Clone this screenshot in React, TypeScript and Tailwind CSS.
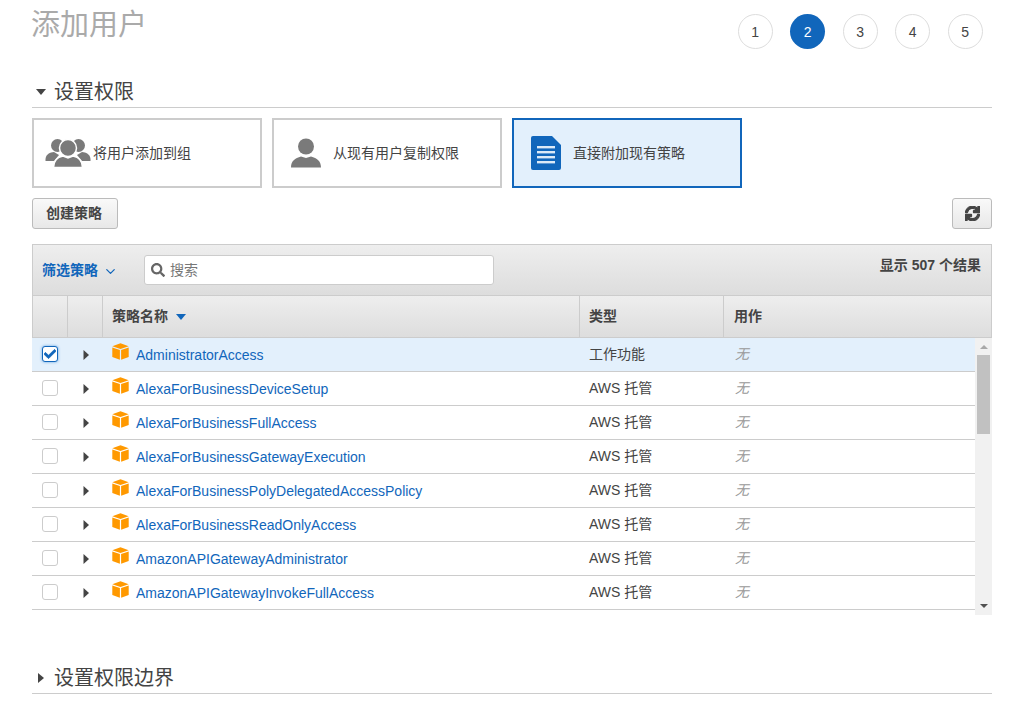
// App.tsx
// Add user wizard, step 2: attach existing policies

import React from 'react';
import { FaCheck, FaSearch, FaSync } from 'react-icons/fa';
import { LuChevronDown } from 'react-icons/lu';

const policies = [
  { name: 'AdministratorAccess', type: '工作功能', selected: true },
  { name: 'AlexaForBusinessDeviceSetup', type: 'AWS 托管' },
  { name: 'AlexaForBusinessFullAccess', type: 'AWS 托管' },
  { name: 'AlexaForBusinessGatewayExecution', type: 'AWS 托管' },
  { name: 'AlexaForBusinessPolyDelegatedAccessPolicy', type: 'AWS 托管' },
  { name: 'AlexaForBusinessReadOnlyAccess', type: 'AWS 托管' },
  { name: 'AmazonAPIGatewayAdministrator', type: 'AWS 托管' },
  { name: 'AmazonAPIGatewayInvokeFullAccess', type: 'AWS 托管' },
];

const CubeIcon = () => (
  <svg width="17" height="17" viewBox="0 0 17 17" className="shrink-0">
    <path d="M8.5 0.3 L16.7 3.2 L8.5 6 L0.3 3.2 Z" fill="#ff9900" />
    <path d="M0.3 4.4 L7.9 7 V16.8 L0.3 13.9 Z" fill="#ff9900" />
    <path d="M16.7 4.4 L9.1 7 V16.8 L16.7 13.9 Z" fill="#ff9900" />
  </svg>
);

const TriangleRight = () => (
  <svg width="6" height="10" viewBox="0 0 6 10">
    <path d="M0.5 0 L6 5 L0.5 10 Z" fill="#444444" />
  </svg>
);

const GroupIcon = () => (
  <svg width="46" height="30" viewBox="0 0 46 30" className="shrink-0">
    <g fill="#7a7a7a">
      <circle cx="12.5" cy="7.5" r="6.5" />
      <circle cx="33.5" cy="7.5" r="6.5" />
      <path d="M0.5 21 C1 16 5 14.5 9 14 L14 17 L9 23 H0.5 Z" />
      <path d="M45.5 21 C45 16 41 14.5 37 14 L32 17 L37 23 H45.5 Z" />
    </g>
    <g fill="#7a7a7a" stroke="#ffffff" strokeWidth="1.5">
      <circle cx="23" cy="10" r="8.5" />
      <path d="M8.5 29.5 C8.5 22 13 19 18 18 L23 20 L28 18 C33 19 37.5 22 37.5 29.5 Z" />
    </g>
  </svg>
);

const UserIcon = () => (
  <svg width="32" height="30" viewBox="0 0 32 30" className="shrink-0">
    <g fill="#7a7a7a">
      <circle cx="16" cy="8.5" r="8" />
      <path d="M1 29.5 C1 23 5 20 11 18.5 L16 20 L21 18.5 C27 20 31 23 31 29.5 Z" />
    </g>
  </svg>
);

const DocIcon = () => (
  <svg width="30" height="34" viewBox="0 0 30 34" className="shrink-0">
    <path d="M2 0 H21 L30 9 V32 a2 2 0 0 1 -2 2 H2 a2 2 0 0 1 -2 -2 V2 a2 2 0 0 1 2 -2 Z" fill="#1166bb" />
    <g fill="#dbe9f7">
      <rect x="6" y="10" width="18" height="2.4" />
      <rect x="6" y="15" width="18" height="2.4" />
      <rect x="6" y="20" width="18" height="2.4" />
      <rect x="6" y="25" width="18" height="2.4" />
    </g>
  </svg>
);

const Steps = () => (
  <div className="flex gap-[17.5px] mr-[9.25px] mt-[14px]">
    {[1, 2, 3, 4, 5].map((step) => (
      <div
        key={step}
        className={
          step === 2
            ? 'w-[35px] h-[35px] rounded-full flex items-center justify-center text-sm bg-[#1166bb] text-white'
            : 'w-[35px] h-[35px] rounded-full flex items-center justify-center text-sm border border-[#dddddd] text-[#444444]'
        }
      >
        {step}
      </div>
    ))}
  </div>
);

const OptionCard = ({ icon, label, active, gap }: { icon: React.ReactNode; label: string; active?: boolean; gap: string }) => (
  <div
    className={
      active
        ? 'w-[230px] h-[70px] border-2 border-[#1166bb] bg-[#e3f0fc] flex items-center pl-[17px] text-sm text-[#444444]'
        : 'w-[230px] h-[70px] border-2 border-[#cccccc] bg-white flex items-center pl-[11px] text-sm text-[#444444]'
    }
  >
    <div className={gap}>{icon}</div>
    <span>{label}</span>
  </div>
);

const Row = ({ name, type, selected }: { name: string; type: string; selected?: boolean }) => (
  <div className={selected ? 'flex h-[34px] border-b border-[#cccccc] bg-[#e3f0fc] text-sm' : 'flex h-[34px] border-b border-[#cccccc] bg-white text-sm'}>
    <div className="w-[35px] shrink-0 flex items-center justify-center -mt-px">
      {selected ? (
        <div className="w-4 h-4 rounded-[3px] border border-[#1166bb] bg-white flex items-center justify-center shadow-[0_0_3px_#5b9fe0]">
          <FaCheck className="text-[#1166bb] text-[12px] stroke-[30px]" />
        </div>
      ) : (
        <div className="w-4 h-4 rounded-[3px] border border-[#cccccc] bg-white" />
      )}
    </div>
    <div className="w-[35px] shrink-0 flex items-center justify-center pl-[2px]">
      <TriangleRight />
    </div>
    <div className="w-[477px] shrink-0 flex items-center pl-[10px] gap-[7px]">
      <div className="-mt-[6px]"><CubeIcon /></div>
      <span className="text-[#1166bb]">{name}</span>
    </div>
    <div className="w-[144px] shrink-0 flex items-center pl-[10px] text-[#444444] -mt-px">{type}</div>
    <div className="flex-1 flex items-center pl-[12px] italic text-[#999999] -mt-px">无</div>
  </div>
);

export default function App() {
  return (
    <div className="w-[1013px] h-[714px] overflow-hidden bg-white pl-8 pr-[21px] font-['Liberation_Sans','Noto_Sans_CJK_SC',sans-serif] text-[#444444]">
      {/* Header */}
      <div className="flex items-start justify-between h-[74px]">
        <h1 className="text-[29px] leading-[50px] text-[#aaaaaa] font-normal -ml-px">添加用户</h1>
        <Steps />
      </div>

      {/* Permissions section */}
      <div className="flex items-center h-[34px] pt-[2px] border-b border-[#cccccc] text-xl leading-[30px]">
        <svg width="10" height="6" viewBox="0 0 10 6" className="ml-[4px] mr-[8px]">
          <path d="M0 0 H10 L5 6 Z" fill="#444444" />
        </svg>
        设置权限
      </div>

      <div className="flex gap-[10px] mt-[10px]">
        <OptionCard icon={<GroupIcon />} label="将用户添加到组" gap="mr-[2px]" />
        <OptionCard icon={<UserIcon />} label="从现有用户复制权限" gap="ml-[5px] mr-[11px]" active={false} />
        <OptionCard icon={<DocIcon />} label="直接附加现有策略" gap="mr-[12px]" active />
      </div>

      {/* Actions */}
      <div className="flex justify-between mt-[10px]">
        <button className="w-[86px] h-[31px] pr-[2px] pb-[2px] rounded-[3px] border border-[#bbbbbb] bg-gradient-to-b from-[#f9f9f9] to-[#e8e8e8] text-sm font-bold text-[#444444]">
          创建策略
        </button>
        <button className="w-10 h-[31px] rounded-[3px] border border-[#bbbbbb] bg-gradient-to-b from-[#f9f9f9] to-[#e8e8e8] flex items-center justify-center">
          <FaSync className="text-[#444444] text-[15px] stroke-[40px]" />
        </button>
      </div>

      {/* Policy table */}
      <div className="mt-[15px]">
        <div className="flex h-[51px] border border-b-0 border-[#cccccc] bg-gradient-to-b from-[#eeeeee] to-[#dddddd]">
          <div className="flex items-center h-[50px] pl-[9px] text-sm font-bold text-[#1166bb]">
            筛选策略
            <LuChevronDown className="ml-[5px] mt-[2px] text-[15px]" />
          </div>
          <div className="ml-[26px] mt-[10px] w-[350px] h-[30px] rounded-[3px] border border-[#cccccc] bg-white flex items-center pl-[6px] gap-[5px]">
            <FaSearch className="text-[#666666] text-[14px]" />
            <span className="text-sm text-[#777777]">搜索</span>
          </div>
          <div className="flex-1 text-right pr-[10px] pt-[11px] text-sm leading-[18px] font-bold text-[#444444]">
            显示 507 个结果
          </div>
        </div>
        <div className="flex h-[43px] pb-0 border border-[#cccccc] bg-gradient-to-b from-[#eeeeee] to-[#dddddd] text-sm font-bold text-[#444444]">
          <div className="w-[35px] shrink-0 border-r border-[#cccccc]" />
          <div className="w-[35px] shrink-0 border-r border-[#cccccc]" />
          <div className="w-[477px] shrink-0 border-r border-[#cccccc] flex items-center pl-[9px] pb-[2px]">
            策略名称
            <svg width="10" height="6" viewBox="0 0 10 6" className="ml-[8px] mt-[2px]">
              <path d="M0 0 H10 L5 6 Z" fill="#1166bb" />
            </svg>
          </div>
          <div className="w-[144px] shrink-0 border-r border-[#cccccc] flex items-center pl-[9px] pb-[2px]">类型</div>
          <div className="flex-1 flex items-center pl-[10px] pb-[2px]">用作</div>
        </div>

        {/* Rows and scrollbar */}
        <div className="flex h-[277px]">
          <div className="flex-1">
            {policies.map((p) => (
              <Row key={p.name} name={p.name} type={p.type} selected={p.selected} />
            ))}
          </div>
          <div className="w-[17px] shrink-0 bg-[#f1f1f1] flex flex-col items-center">
            <svg width="8" height="4" viewBox="0 0 8 4" className="mt-[7px]">
              <path d="M0 4 H8 L4 0 Z" fill="#a8a8a8" />
            </svg>
            <div className="w-[13px] h-[79px] bg-[#c1c1c1] mt-[6px]" />
            <svg width="8" height="4" viewBox="0 0 8 4" className="mt-auto mb-[7px]">
              <path d="M0 0 H8 L4 4 Z" fill="#505050" />
            </svg>
          </div>
        </div>
      </div>

      {/* Permissions boundary section */}
      <div className="flex items-center h-[34px] mt-[45px] pt-[2px] border-b border-[#cccccc] text-xl leading-[30px]">
        <svg width="6" height="10" viewBox="0 0 6 10" className="ml-[6px] mr-[10px]">
          <path d="M0 0 L6 5 L0 10 Z" fill="#444444" />
        </svg>
        设置权限边界
      </div>
    </div>
  );
}
